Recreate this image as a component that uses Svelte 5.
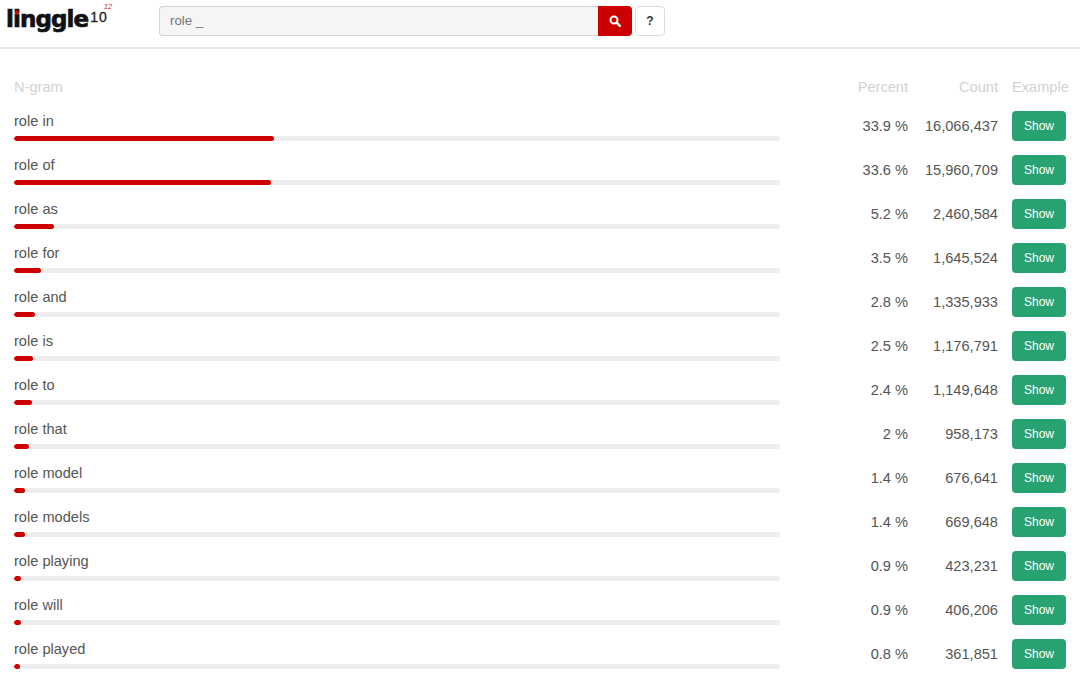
<script lang="ts">
  const rows = [
    { gram: 'role in', pct: 33.9, count: '16,066,437' },
    { gram: 'role of', pct: 33.6, count: '15,960,709' },
    { gram: 'role as', pct: 5.2, count: '2,460,584' },
    { gram: 'role for', pct: 3.5, count: '1,645,524' },
    { gram: 'role and', pct: 2.8, count: '1,335,933' },
    { gram: 'role is', pct: 2.5, count: '1,176,791' },
    { gram: 'role to', pct: 2.4, count: '1,149,648' },
    { gram: 'role that', pct: 2, count: '958,173' },
    { gram: 'role model', pct: 1.4, count: '676,641' },
    { gram: 'role models', pct: 1.4, count: '669,648' },
    { gram: 'role playing', pct: 0.9, count: '423,231' },
    { gram: 'role will', pct: 0.9, count: '406,206' },
    { gram: 'role played', pct: 0.8, count: '361,851' },
  ];
</script>

<div class="page">
  <header>
    <div class="logo">
      <span class="word">linggle</span><span class="ten">10</span><span class="sup">12</span>
      <span class="dot"></span>
    </div>
    <div class="search">
      <div class="input">role _</div>
      <button class="go" aria-label="Search">
        <svg width="12" height="12" viewBox="0 0 12 12">
          <circle cx="5" cy="5" r="3.5" fill="none" stroke="#fff" stroke-width="2" />
          <path d="M7.7 7.7 L10.8 10.8" stroke="#fff" stroke-width="2.4" stroke-linecap="round" />
        </svg>
      </button>
      <button class="help">?</button>
    </div>
  </header>

  <main>
    <div class="row head">
      <div>N-gram</div>
      <div class="num">Percent</div>
      <div class="num">Count</div>
      <div class="last">Example</div>
    </div>
    {#each rows as r (r.gram)}
      <div class="row item">
        <div class="gram">
          <div class="label">{r.gram}</div>
          <div class="track"><div class="fill" style="width: {r.pct}%"></div></div>
        </div>
        <div class="num">{r.pct} %</div>
        <div class="num">{r.count}</div>
        <div class="last"><button class="show">Show</button></div>
      </div>
    {/each}
  </main>
</div>

<style>
  :global(body) {
    margin: 0;
    background: #fff;
    overflow: hidden;
  }
  .page {
    font-family: "Liberation Sans", Arial, sans-serif;
    color: #555;
    font-size: 14.6px;
  }
  header {
    height: 47px;
    border-bottom: 2px solid #e7e7e7;
    display: flex;
    align-items: flex-start;
  }
  .logo {
    width: 159px;
    padding-left: 6px;
    box-sizing: border-box;
    display: flex;
    align-items: flex-start;
    position: relative;
    height: 47px;
  }
  .word {
    font-family: "DejaVu Sans", sans-serif;
    font-weight: 700;
    font-size: 23px;
    line-height: 38px;
    letter-spacing: -0.9px;
    color: #111;
    -webkit-text-stroke: 0.7px #111;
  }
  .dot {
    position: absolute;
    left: 14.5px;
    top: 10px;
    width: 4.5px;
    height: 4.5px;
    border-radius: 50%;
    background: #b01020;
  }
  .ten {
    font-size: 14px;
    letter-spacing: 1px;
    color: #222;
    margin: 10px 0 0 2px;
    line-height: 14px;
    -webkit-text-stroke: 0.3px #222;
  }
  .sup {
    position: absolute;
    left: 104px;
    top: 3px;
    font-size: 7px;
    line-height: 8px;
    font-style: italic;
    color: #cc2222;
  }
  .search {
    display: flex;
    margin-top: 6px;
  }
  .input {
    width: 439px;
    height: 30px;
    box-sizing: border-box;
    background: #f5f5f5;
    border: 1px solid #d4d4d4;
    border-right: 0;
    border-radius: 4px 0 0 4px;
    padding: 0 10px;
    line-height: 28px;
    font-size: 13.3px;
    color: #777;
  }
  .go {
    width: 34px;
    height: 30px;
    padding: 0;
    background: #cc0000;
    border: 0;
    border-radius: 0 4px 4px 0;
    display: flex;
    align-items: center;
    justify-content: center;
  }
  .help {
    width: 30px;
    height: 30px;
    margin-left: 3px;
    padding: 0;
    background: #fff;
    border: 1px solid #dcdcdc;
    border-radius: 4px;
    font: 700 12px "Liberation Sans", Arial, sans-serif;
    color: #333;
  }
  main {
    padding: 0 10px 0 14px;
  }
  .row {
    display: grid;
    grid-template-columns: 766px 128px 90px 57px;
  }
  .head {
    color: #d2d2d2;
    height: 35px;
    padding-top: 28px;
    line-height: 20px;
  }
  .item {
    height: 44px;
  }
  .last {
    padding-left: 14px;
    white-space: nowrap;
  }
  .item .last {
    margin-top: -1px;
  }
  .num {
    text-align: right;
  }
  .item .num {
    line-height: 28px;
  }
  .label {
    height: 24px;
    line-height: 18px;
  }
  .track {
    height: 5px;
    background: #eeeeee;
    border-radius: 3px;
    overflow: hidden;
  }
  .fill {
    height: 100%;
    background: #cc0000;
    border-radius: 3px;
  }
  .show {
    width: 54px;
    height: 30px;
    padding: 0;
    background: #28a270;
    border: 0;
    border-radius: 4px;
    color: #fff;
    font: 12px "Liberation Sans", Arial, sans-serif;
  }
</style>
